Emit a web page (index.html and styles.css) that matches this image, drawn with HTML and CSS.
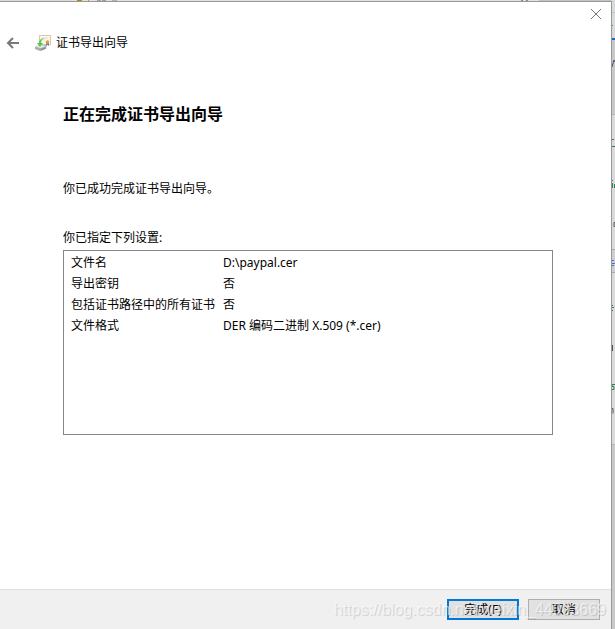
FILE: index.html
```
<!DOCTYPE html>
<html lang="zh-CN">
<head>
    <meta charset="utf-8" />
    <title>证书导出向导</title>
    <link rel="stylesheet" href="styles.css">
</head>
<body>
    <!-- Window behind the wizard -->
    <div class="backdrop" aria-hidden="true">
        <svg class="backTop" width="615" height="2" viewBox="0 0 615 2">
            <rect width="71" height="2" fill="#d9d9d9" />
            <rect x="71" width="468" height="2" fill="#e2e2e2" />
            <rect x="77" width="5" height="2" fill="#b8860b" />
            <rect x="88" width="1" height="2" fill="#c98a3c" />
            <rect x="97" width="4" height="1" fill="#8ba3c4" />
            <rect x="102" width="4" height="1" fill="#a59a8c" />
            <rect x="112" width="5" height="1" fill="#9db5d0" />
            <rect x="521" width="2" height="2" fill="#888888" />
            <rect x="526" width="2" height="2" fill="#888888" />
            <rect x="539" width="76" height="2" fill="#c4c4c4" />
        </svg>
        <svg class="backSide" width="4" height="629" viewBox="0 0 4 629">
            <rect width="4" height="629" fill="#c9c9c9" />
            <rect width="4" height="38" fill="#d8dadd" />
            <rect y="12" width="4" height="1" fill="#c0c0c0" />
            <rect y="25" width="2" height="1" fill="#777777" />
            <rect y="38" width="4" height="2" fill="#1b66d2" />
            <path d="M1 67 L3 60 L4 62" fill="none" stroke="#4a4a68" />
            <rect y="114" width="4" height="330" fill="#dadada" />
            <rect y="114" width="4" height="1" fill="#b5b5b5" />
            <path d="M0 139.500h3M0 146.500h4M1.500 180v1M1.500 183v5M3.500 184v4" stroke="#2c8055" />
            <path d="M4 222.500h-1v4h1" fill="none" stroke="#555555" />
            <rect y="249" width="4" height="24" fill="#cfcfcf" />
            <path d="M0 249.500h4M0 272.500h4" stroke="#aaaaaa" />
            <path d="M1 260.500h2M1 263.500h3M1 265.500h2" stroke="#4c70d0" />
            <path d="M1 305.500h1M1 307.500h2M0 310.500h2" stroke="#2c8055" />
            <path d="M1.500 345v6" stroke="#555555" />
            <path d="M4 384.500h-3v2h2v3h-3" fill="none" stroke="#2c8055" />
            <path d="M0 408.500h2v5" fill="none" stroke="#555555" />
            <rect y="444" width="4" height="1" fill="#b8b8b8" />
        </svg>
    </div>

    <div class="wizard">
        <!-- Title bar -->
        <div class="titleBar">
            <button type="button" class="closeButton" aria-label="关闭">
                <svg width="12" height="12" viewBox="0 0 12 12">
                    <path d="M1 1 L11 11 M11 1 L1 11" stroke="#777777" fill="none" />
                </svg>
            </button>
        </div>

        <!-- Back button and wizard name -->
        <div class="header">
            <button type="button" class="backButton" aria-label="上一步">
                <svg width="14" height="12" viewBox="0 0 14 12">
                    <path d="M13 6 H2 M7 1 L2 6 L7 11" stroke="#777777" stroke-width="2" fill="none" />
                </svg>
            </button>
            <svg class="certIcon" width="16" height="16" viewBox="0 0 16 16">
                <rect x="4.500" y="0.500" width="11" height="9" fill="#fbf7ee" stroke="#d9c9ad" />
                <path d="M8 3h5M8 5h2" stroke="#d8d8d8" />
                <path d="M11 8 V11 L12 10 L14 11 V8" fill="#5b8be0" />
                <circle cx="12.500" cy="7" r="1.800" fill="#f09a1c" />
                <path d="M0 12 L4 10 L12 10 L11 14 L5 16 L0 14 Z" fill="#a9adad" />
                <path d="M1 12 L5 10 L11 11 L6 13 Z" fill="#e9eceb" />
                <path d="M6 15 L10 13" stroke="#777c7c" />
                <path d="M8 3 C5 4 4 6 4 8 L2 8 L5 12 L8 8 L6 8 C6 6 7 4 9 3 Z" fill="#4fc84a" />
            </svg>
            <span class="wizardName">证书导出向导</span>
        </div>

        <!-- Page content -->
        <div class="content">
            <h1>正在完成证书导出向导</h1>
            <p class="message">你已成功完成证书导出向导。</p>
            <p class="listLabel" id="settingsLabel">你已指定下列设置:</p>
            <div class="settings">
                <table aria-labelledby="settingsLabel">
                    <tr><th scope="row">文件名</th><td>D:\paypal.cer</td></tr>
                    <tr><th scope="row">导出密钥</th><td>否</td></tr>
                    <tr><th scope="row">包括证书路径中的所有证书</th><td>否</td></tr>
                    <tr><th scope="row">文件格式</th><td>DER 编码二进制 X.509 (*.cer)</td></tr>
                </table>
            </div>
        </div>

        <!-- Buttons -->
        <div class="footer">
            <button type="button" class="button primary">完成(F)</button>
            <button type="button" class="button">取消</button>
            <span class="watermark">https://blog.csdn.net/weixin_44003669</span>
        </div>
    </div>
</body>
</html>
```
FILE: styles.css
```
* {
    box-sizing: border-box;
}

body {
    margin: 0;
    padding: 2px 3px 0 0;
    min-height: 100vh;
    display: flex;
    position: relative;
    overflow: hidden;
    background: #c9c9c9;
    color: #000000;
    font-family: "Noto Sans", "Noto Sans CJK SC", sans-serif;
    font-size: 12px;
    line-height: 16px;
}

h1, p {
    margin: 0;
}

button {
    font: inherit;
    color: inherit;
}

/* Window behind the wizard */
.backdrop svg {
    position: absolute;
    display: block;
}

.backTop {
    top: 0;
    left: 0;
}

.backSide {
    top: 0;
    right: 0;
}

/* Wizard */
.wizard {
    flex: 1;
    display: flex;
    flex-direction: column;
    position: relative;
    margin-top: -1px;
    border-top: 1px solid #999999;
    border-right: 1px solid #999999;
    background: #ffffff;
}

.titleBar {
    display: flex;
    justify-content: flex-end;
    height: 29px;
    padding: 2px 5px;
}

.closeButton, .backButton {
    display: flex;
    align-items: center;
    justify-content: center;
    width: 20px;
    height: 20px;
    padding: 0;
    border: none;
    background: none;
}

.header {
    display: flex;
    align-items: center;
    height: 24px;
    padding-left: 3px;
}

.certIcon {
    margin-left: 12px;
}

.wizardName {
    margin-left: 5px;
}

.content {
    flex: 1;
    padding: 47px 58px 40px 63px;
}

h1 {
    font-size: 16px;
    line-height: 24px;
    font-weight: bold;
}

.message {
    margin-top: 55px;
}

.listLabel {
    margin-top: 33px;
}

.settings {
    min-height: 185px;
    margin-top: 4px;
    padding: 1px 0 0 7px;
    border: 1px solid #828790;
}

table {
    border-collapse: collapse;
}

th, td {
    height: 21px;
    padding: 0;
    font-weight: normal;
    text-align: left;
    white-space: nowrap;
}

th {
    width: 152px;
}

.footer {
    display: flex;
    justify-content: flex-end;
    gap: 9px;
    position: relative;
    height: 40px;
    padding: 9px 11px;
    border-top: 1px solid #dfdfdf;
    background: #f0f0f0;
}

.button {
    width: 72px;
    height: 21px;
    padding: 0;
    border: 1px solid #adadad;
    background: #e1e1e1;
    line-height: 16px;
}

.primary {
    border: 2px solid #0078d7;
}

/* Lies over the buttons */
.watermark {
    position: absolute;
    right: 5px;
    bottom: 9px;
    color: rgba(255, 255, 255, 0.6);
    font-family: "Liberation Sans", sans-serif;
    font-size: 16px;
    line-height: 20px;
    text-shadow: 1px 1px 1px rgba(0, 0, 0, 0.15);
    pointer-events: none;
}
```
